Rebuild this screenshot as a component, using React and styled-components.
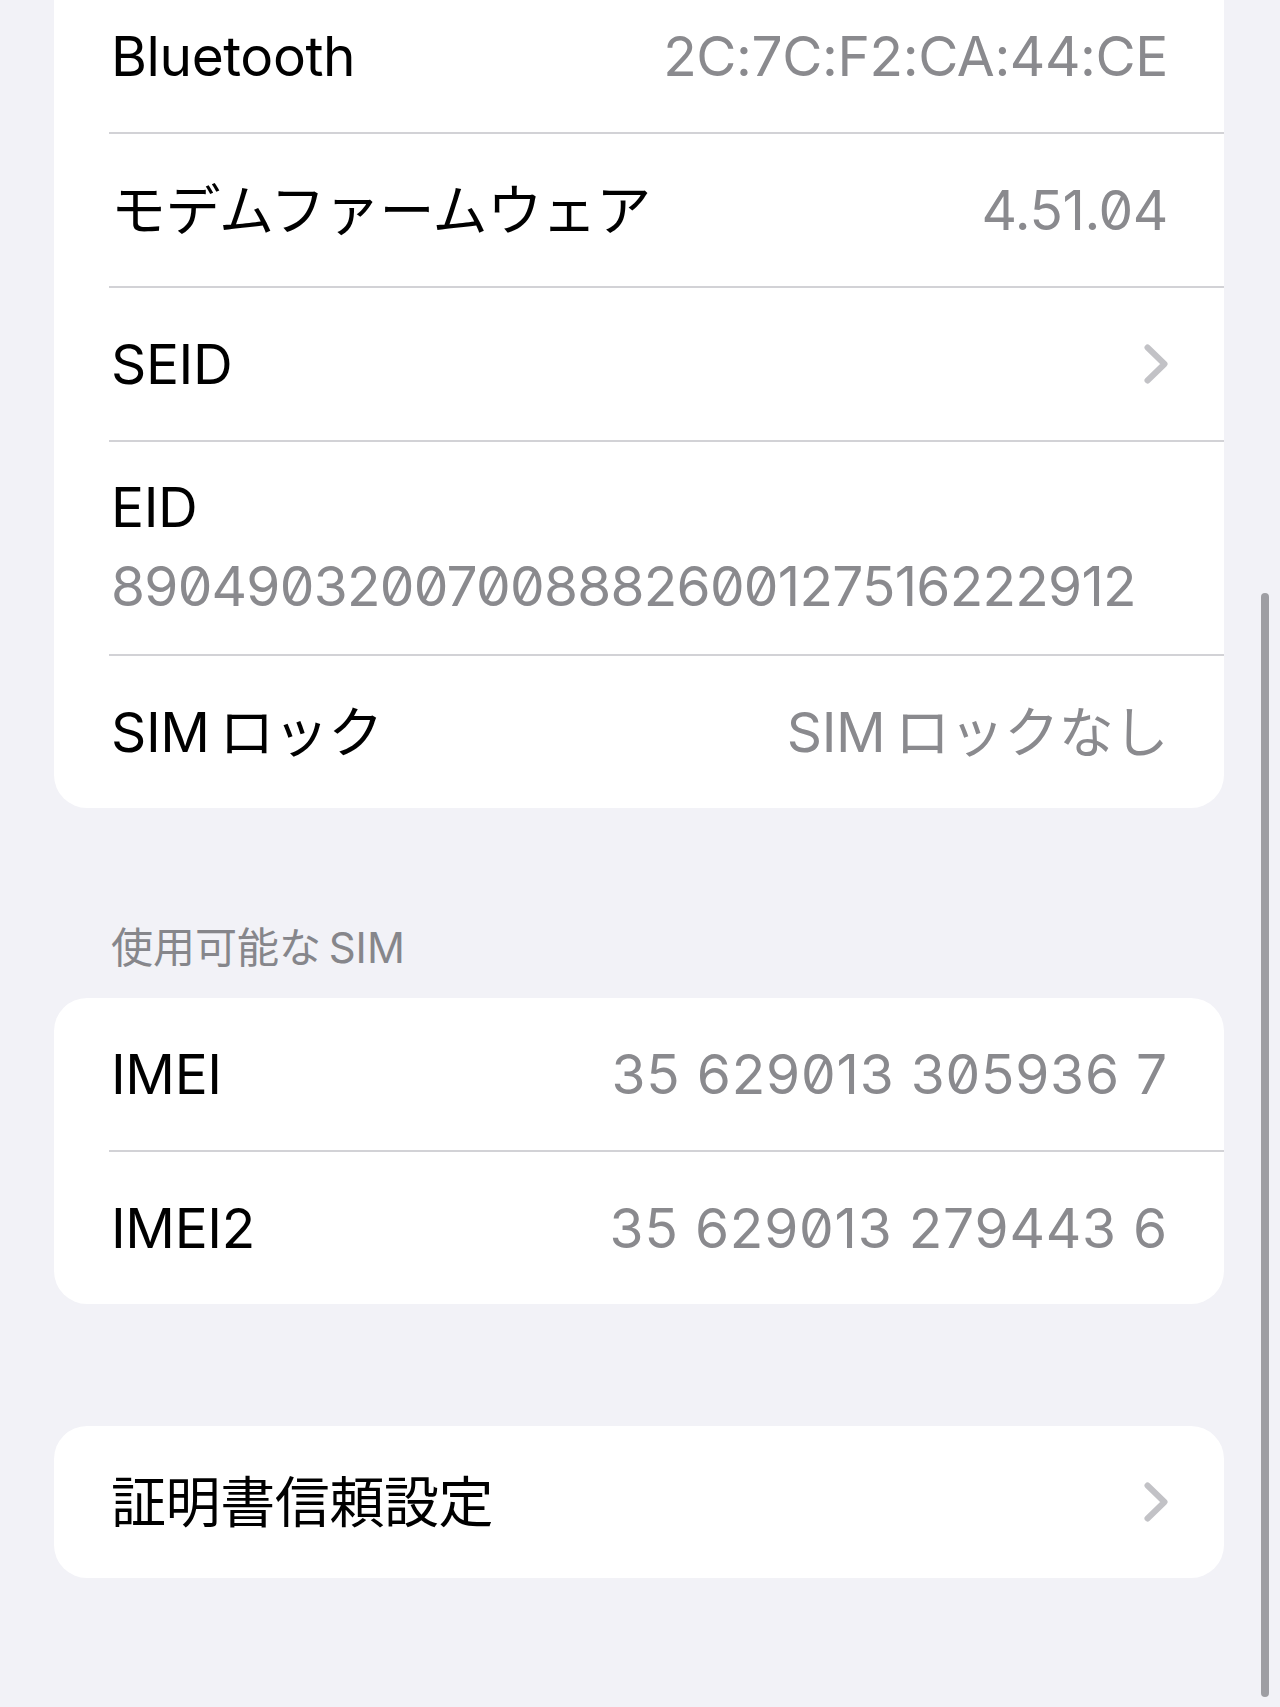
import React from "react";
import styled, { createGlobalStyle } from "styled-components";

const GlobalStyle = createGlobalStyle`
  html, body {
    margin: 0;
    padding: 0;
    background: #f2f2f7;
  }
  body {
    font-family: Inter, "Noto Sans CJK JP", "Noto Sans", sans-serif;
    -webkit-font-smoothing: antialiased;
  }
`;

const Page = styled.div`
  position: relative;
  min-height: 1707px;
  overflow: hidden;
  padding: 0 56px 0 54px;
  box-sizing: border-box;
  display: flex;
  flex-direction: column;
`;

const Card = styled.div`
  background: #ffffff;
  border-radius: ${(p) => (p.$continued ? "0 0 33px 33px" : "33px")};
  margin-top: ${(p) => p.$top || "0px"};
  display: flex;
  flex-direction: column;
`;

const Row = styled.div`
  display: flex;
  align-items: center;
  justify-content: space-between;
  min-height: 152px;
  padding: 0 56px 0 57px;
  box-sizing: border-box;
`;

const StackRow = styled.div`
  display: flex;
  flex-direction: column;
  justify-content: center;
  gap: 13px;
  padding: 32px 56px 35px 57px;
`;

const Divider = styled.div`
  height: 2px;
  margin-left: 55px;
  background: #d2d2d6;
`;

const Label = styled.span`
  font-size: 55px;
  line-height: 66px;
  color: #000000;
  letter-spacing: -0.4px;
  white-space: nowrap;
`;

const Value = styled.span`
  font-size: 55px;
  line-height: 66px;
  color: #8a8a8e;
  letter-spacing: ${(p) => p.$spacing || "-0.4px"};
  font-feature-settings: "zero" 1;
  white-space: nowrap;
`;

const SectionHeader = styled.div`
  margin-top: 115px;
  margin-bottom: 25px;
  padding: 0 57px;
  font-size: 42px;
  line-height: 50px;
  color: #86868b;
  letter-spacing: 0px;
`;

const Scrollbar = styled.div`
  position: absolute;
  right: 11px;
  top: 593px;
  width: 8px;
  height: 1104px;
  border-radius: 4px;
  background: #9e9ea3;
`;

const Chevron = () => (
  <svg width="24" height="40" viewBox="0 0 24 40" aria-hidden="true">
    <path
      d="M3.5 3.5 L20.5 20 L3.5 36.5"
      fill="none"
      stroke="#c2c2c6"
      strokeWidth="6"
      strokeLinecap="round"
      strokeLinejoin="round"
    />
  </svg>
);

export default function App() {
  return (
    <>
      <GlobalStyle />
      <Page>
        <Card $continued $top="-20px">
          <Row>
            <Label>Bluetooth</Label>
            <Value>2C:7C:F2:CA:44:CE</Value>
          </Row>
          <Divider />
          <Row>
            <Label>モデムファームウェア</Label>
            <Value>4.51.04</Value>
          </Row>
          <Divider />
          <Row>
            <Label>SEID</Label>
            <Chevron />
          </Row>
          <Divider />
          <StackRow>
            <Label>EID</Label>
            <Value $spacing="-0.75px">89049032007008882600127516222912</Value>
          </StackRow>
          <Divider />
          <Row>
            <Label>SIM{"\u2009"}ロック</Label>
            <Value>SIM{"\u2009"}ロックなし</Value>
          </Row>
        </Card>

        <SectionHeader>使用可能な{"\u2009"}SIM</SectionHeader>

        <Card>
          <Row>
            <Label>IMEI</Label>
            <Value $spacing="0.8px">35 629013 305936 7</Value>
          </Row>
          <Divider />
          <Row>
            <Label>IMEI2</Label>
            <Value $spacing="0.8px">35 629013 279443 6</Value>
          </Row>
        </Card>

        <Card $top="122px">
          <Row>
            <Label>証明書信頼設定</Label>
            <Chevron />
          </Row>
        </Card>

        <Scrollbar />
      </Page>
    </>
  );
}
